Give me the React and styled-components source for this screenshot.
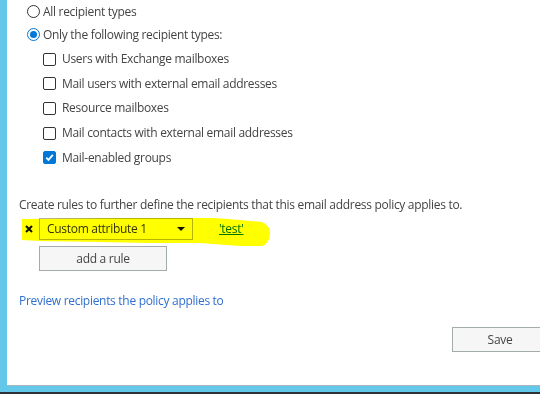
import React from "react";
import styled, { createGlobalStyle } from "styled-components";

const GlobalStyle = createGlobalStyle`
  html, body { margin: 0; padding: 0; }
  body { font-family: "Segoe UI", "Open Sans", "Noto Sans", sans-serif; background: #2b2b2b; }
`;

const Frame = styled.div`
  position: relative;
  width: 533px;
  height: 392px;
  background: #62c7e8;
  border-bottom: 2px solid #2e3236;
  padding-left: 7px;
  box-sizing: content-box;
  overflow: hidden;
`;

const Panel = styled.div`
  width: 533px;
  height: 385px;
  background: #ffffff;
  box-shadow: 0 1px 0 #a9b8bf;
  box-sizing: border-box;
  padding-left: 12px;
  display: flex;
  flex-direction: column;
  color: #444444;
  font-size: 12px;
  letter-spacing: -0.3px;
`;

const RadioGroup = styled.div`
  display: flex;
  flex-direction: column;
  padding-left: 8px;
`;

const OptionRow = styled.div`
  display: flex;
  align-items: center;
  height: ${p => p.$h}px;
  gap: 3px;
`;

const Radio = styled.span`
  width: 13px;
  height: 13px;
  border-radius: 50%;
  box-sizing: border-box;
  border: 1px solid ${p => (p.$on ? "#0078d7" : "#333")};
  display: flex;
  align-items: center;
  justify-content: center;
  flex: none;
  &::after {
    content: "";
    width: 7px;
    height: 7px;
    border-radius: 50%;
    background: ${p => (p.$on ? "#0078d7" : "transparent")};
  }
`;

const CheckList = styled.div`
  display: flex;
  flex-direction: column;
  padding-left: 24px;
  padding-top: 1px;
`;

const Box = styled.span`
  width: 13px;
  height: 13px;
  border-radius: 2px;
  box-sizing: border-box;
  border: 1px solid ${p => (p.$on ? "#0078d7" : "#333")};
  background: ${p => (p.$on ? "#0078d7" : "#fff")};
  display: flex;
  align-items: center;
  justify-content: center;
  flex: none;
  margin-right: 3px;
`;

const Label = styled.span`
  line-height: 16px;
  white-space: nowrap;
`;

const Intro = styled.div`
  margin-top: 27px;
  line-height: 16px;
  white-space: nowrap;
`;

const RuleRow = styled.div`
  display: flex;
  align-items: center;
  margin-top: 5px;
  height: 22px;
`;

const Remove = styled.span`
  width: 20px;
  display: flex;
  align-items: center;
  justify-content: flex-start;
  padding-left: 6px;
  box-sizing: border-box;
`;

const Select = styled.div`
  width: 154px;
  height: 22px;
  box-sizing: border-box;
  border: 1px solid #b5b5b5;
  background: #fff;
  display: flex;
  align-items: center;
  justify-content: space-between;
  padding: 0 7px 0 7px;
  color: #333;
`;

const Arrow = styled.span`
  width: 0;
  height: 0;
  border-left: 4px solid transparent;
  border-right: 4px solid transparent;
  border-top: 4px solid #111;
`;

const ValueLink = styled.a`
  margin-left: 26px;
  color: #0072c6;
  text-decoration: underline;
`;

const Button = styled.button`
  font-family: inherit;
  font-size: 12px;
  letter-spacing: -0.3px;
  color: #444;
  background: #f6f6f6;
  border: 1px solid #a3abab;
  width: ${p => p.$w}px;
  height: 25px;
  padding: 0;
  box-sizing: border-box;
`;

const AddRow = styled.div`
  display: flex;
  padding-left: 20px;
  margin-top: 6px;
`;

const Preview = styled.a`
  margin-top: 22px;
  color: #2f6fce;
  line-height: 16px;
  white-space: nowrap;
`;

const Footer = styled.div`
  display: flex;
  justify-content: flex-end;
  margin-top: 18px;
  margin-right: -8px;
`;

const Highlight = styled.svg`
  position: absolute;
  left: 0;
  top: 0;
  width: 540px;
  height: 394px;
  mix-blend-mode: multiply;
  pointer-events: none;
`;

const Check = () => (
  <svg width="9" height="9" viewBox="0 0 9 9">
    <path d="M1.2 4.6 L3.5 6.9 L7.8 1.8" fill="none" stroke="#fff" strokeWidth="1.8" />
  </svg>
);

const XIcon = () => (
  <svg width="8" height="8" viewBox="0 0 8 8">
    <path d="M1 1 L7 7 M7 1 L1 7" stroke="#111" strokeWidth="2" />
  </svg>
);

const types = [
  ["Users with Exchange mailboxes", false],
  ["Mail users with external email addresses", false],
  ["Resource mailboxes", false],
  ["Mail contacts with external email addresses", false],
  ["Mail-enabled groups", true],
];

export default function App() {
  return (
    <>
      <GlobalStyle />
      <Frame>
        <Panel>
          <RadioGroup>
            <OptionRow $h={23}>
              <Radio />
              <Label>All recipient types</Label>
            </OptionRow>
            <OptionRow $h={23}>
              <Radio $on />
              <Label>Only the following recipient types:</Label>
            </OptionRow>
          </RadioGroup>
          <CheckList>
            {types.map(([t, on]) => (
              <OptionRow key={t} $h={24.6}>
                <Box $on={on}>{on && <Check />}</Box>
                <Label>{t}</Label>
              </OptionRow>
            ))}
          </CheckList>
          <Intro>Create rules to further define the recipients that this email address policy applies to.</Intro>
          <RuleRow>
            <Remove><XIcon /></Remove>
            <Select>
              <span>Custom attribute 1</span>
              <Arrow />
            </Select>
            <ValueLink>'test'</ValueLink>
          </RuleRow>
          <AddRow>
            <Button $w={128}>add a rule</Button>
          </AddRow>
          <Preview>Preview recipients the policy applies to</Preview>
          <Footer>
            <Button $w={96}>Save</Button>
          </Footer>
        </Panel>
        <Highlight viewBox="0 0 540 394">
          <path
            d="M22 219 L120 218 L215 218 L240 220 L262 222 Q271 226 270 234 Q269 244 262 246 L240 246 L200 243 L150 243 L100 242 L40 241 L22 240 Z"
            fill="#ffff00"
          />
        </Highlight>
      </Frame>
    </>
  );
}
